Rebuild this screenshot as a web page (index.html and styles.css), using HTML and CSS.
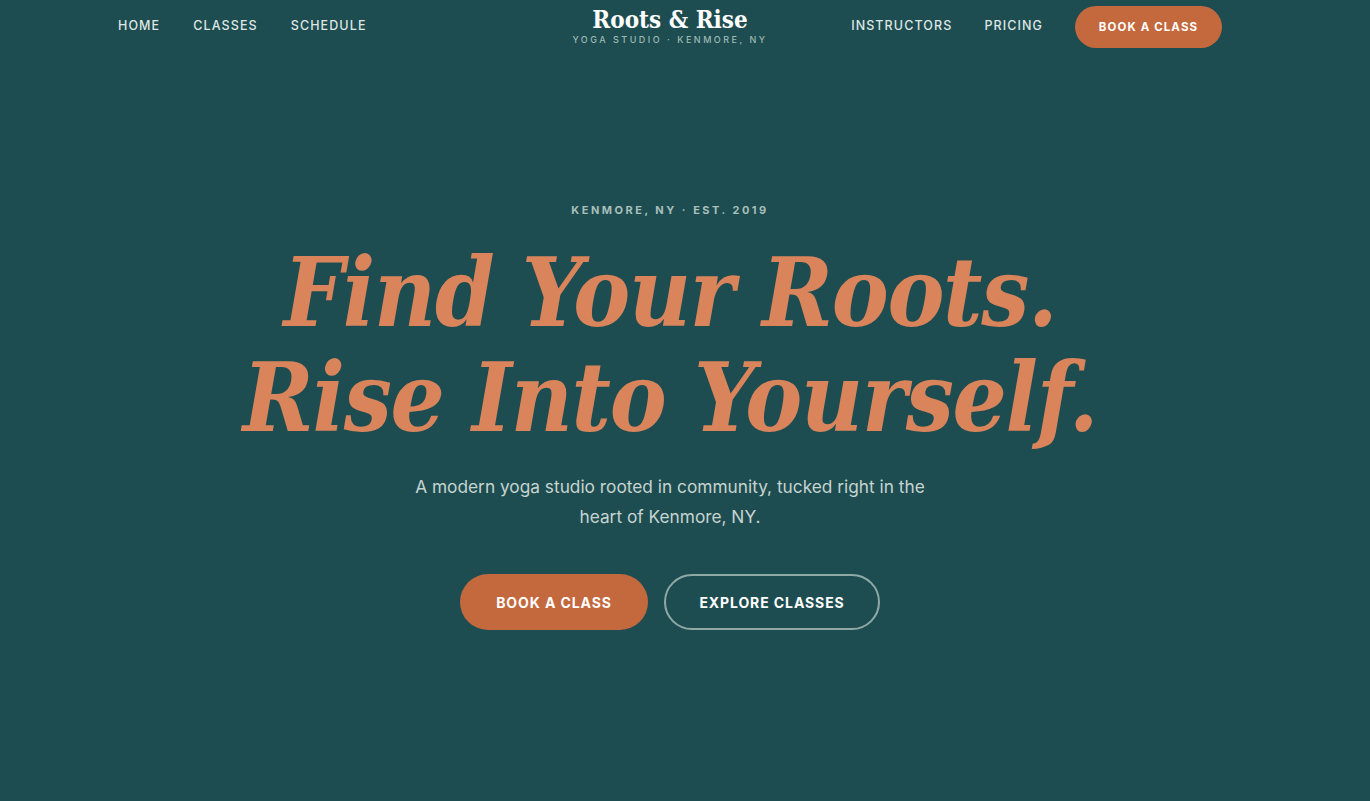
FILE: index.html
```html
<!DOCTYPE html>
<html lang="en">
<head>
<meta charset="utf-8">
<title>Roots &amp; Rise — Yoga Studio · Kenmore, NY</title>
<link rel="stylesheet" href="styles.css">
</head>
<body>
<div class="page">
<header class="nav">
  <nav class="nav-left">
    <a href="#">Home</a>
    <a href="#">Classes</a>
    <a href="#">Schedule</a>
  </nav>
  <div class="brand">
    <div class="brand-name">Roots &amp; Rise</div>
    <div class="brand-sub">Yoga Studio · Kenmore, NY</div>
  </div>
  <nav class="nav-right">
    <a href="#">Instructors</a>
    <a href="#">Pricing</a>
    <a href="#" class="nav-btn">Book a Class</a>
  </nav>
</header>
<main class="hero">
  <p class="eyebrow">Kenmore, NY · Est. 2019</p>
  <h1 class="title">Find Your Roots.<br>Rise Into Yourself.</h1>
  <p class="lead">A modern yoga studio rooted in community, tucked right in the heart of Kenmore, NY.</p>
  <div class="actions">
    <a href="#" class="btn btn-solid">Book a Class</a>
    <a href="#" class="btn btn-outline">Explore Classes</a>
  </div>
</main>
</div>
</body>
</html>
```
FILE: styles.css
```css
* { box-sizing: border-box; }
html, body { margin: 0; padding: 0; }
body {
  background: #1e4d51;
  font-family: "Inter", "Noto Sans", sans-serif;
  color: #e6ece9;
  min-height: 801px;
}
a { color: inherit; text-decoration: none; }
.page { width: 1340px; }

.nav {
  display: grid;
  grid-template-columns: 1fr auto 1fr;
  align-items: center;
  padding: 6px 118px 0 118px;
  height: 48px;
}
.nav-left, .nav-right {
  display: flex;
  align-items: center;
  gap: 33px;
  font-size: 12.5px;
  font-weight: 500;
  letter-spacing: 1.1px;
  text-transform: uppercase;
  color: #dfe6e3;
}
.nav-left { margin-top: -4px; }
.nav-right { justify-content: flex-end; gap: 32px; }
.nav-right > a:not(.nav-btn) { margin-top: -4px; }
.nav-btn {
  background: #c4683e;
  color: #fff;
  border-radius: 21px;
  height: 42px;
  width: 147px;
  display: flex;
  align-items: center;
  justify-content: center;
  font-size: 11.5px;
  font-weight: 700;
  letter-spacing: 1.1px;
}
.brand { text-align: center; margin-top: -2px; }
.brand-name {
  font-family: "DejaVu Serif Condensed", "DejaVu Serif", serif;
  font-weight: 700;
  font-size: 24px;
  color: #fff;
  line-height: 28px;
}
.brand-sub {
  font-size: 9px;
  letter-spacing: 2.5px;
  text-transform: uppercase;
  color: #9fb9b4;
  font-weight: 500;
  line-height: 12px;
}

.hero {
  display: flex;
  flex-direction: column;
  align-items: center;
  text-align: center;
  padding-top: 154px;
}
.eyebrow {
  margin: 0;
  font-size: 11px;
  font-weight: 700;
  letter-spacing: 2.5px;
  text-transform: uppercase;
  color: #a8bfba;
  line-height: 16px;
}
.title {
  margin: 22px 0 0;
  font-family: "DejaVu Serif Condensed", "DejaVu Serif", serif;
  font-style: italic;
  font-weight: 700;
  font-size: 95px;
  line-height: 105px;
  color: #d9845b;
  letter-spacing: -1.3px;
}
.lead {
  margin: 22px 0 0;
  max-width: 540px;
  font-size: 17.3px;
  line-height: 30px;
  color: #c6d4d0;
}
.actions {
  display: flex;
  gap: 16px;
  margin-top: 42px;
}
.btn {
  height: 56px;
  border-radius: 28px;
  display: flex;
  align-items: center;
  justify-content: center;
  font-size: 14px;
  font-weight: 700;
  letter-spacing: 0.9px;
  text-transform: uppercase;
  color: #fff;
}
.btn-solid { background: #c4683e; width: 188px; }
.btn-outline { width: 216px; border: 2px solid #8fa9a6; }
```
